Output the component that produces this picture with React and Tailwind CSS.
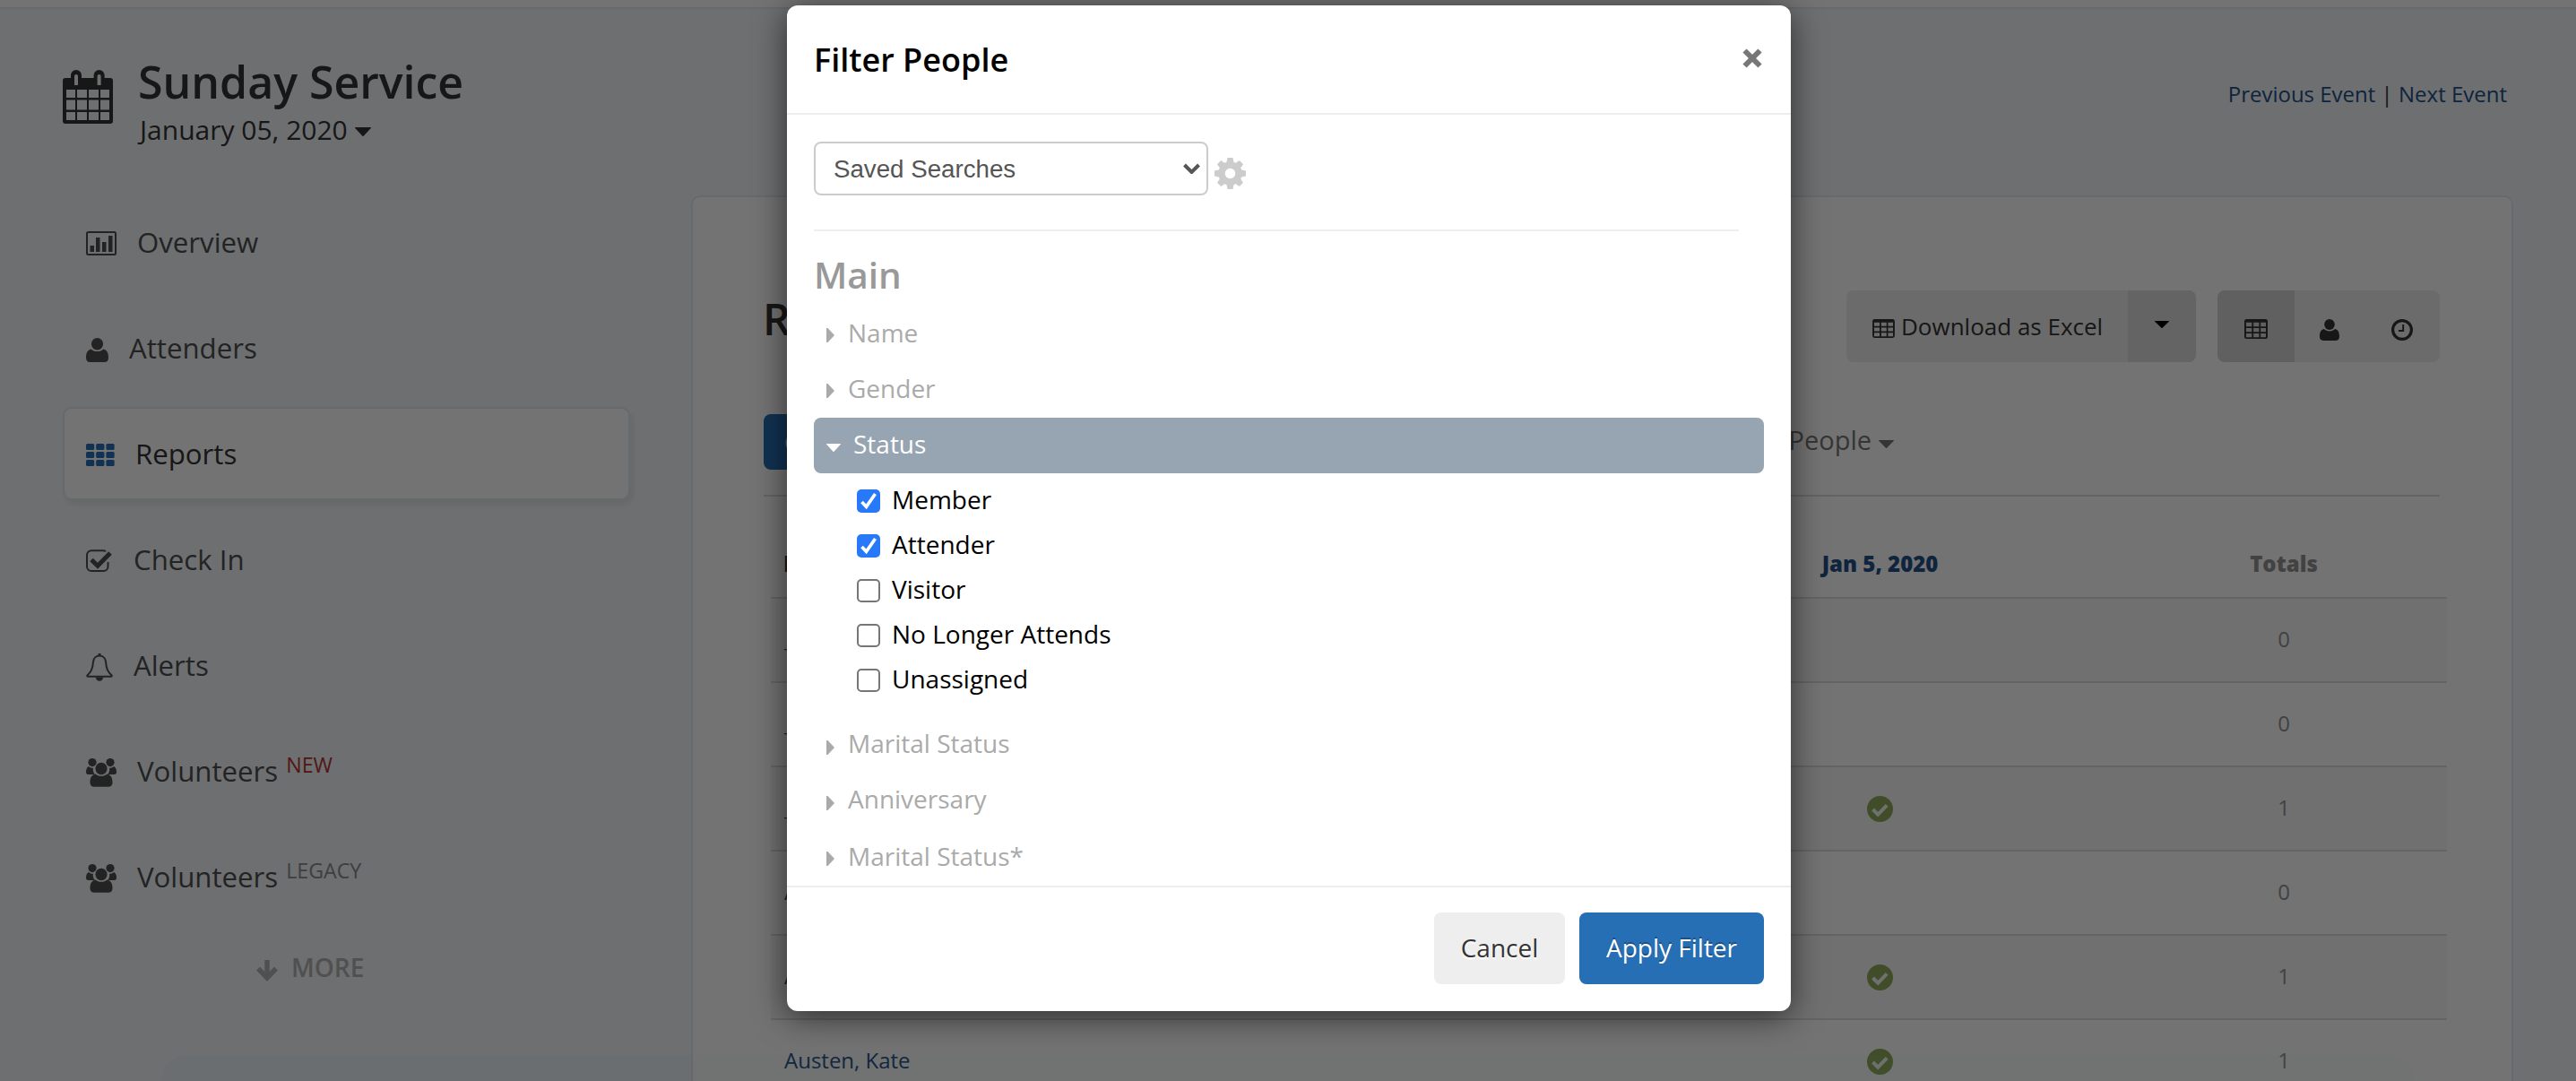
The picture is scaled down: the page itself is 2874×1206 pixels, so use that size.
import React from "react";

/* ---------- icons ---------- */

const CalendarIcon = () => (
  <svg className="block h-[61px] w-14" viewBox="0 0 56 61" fill="#333">
    <path
      fillRule="evenodd"
      d="M3 9H9V6a6 6 0 0 1 12 0v3H34.600V6a6 6 0 0 1 12 0v3H53a3 3 0 0 1 3 3V57a3 3 0 0 1-3 3H3a3 3 0 0 1-3-3V12a3 3 0 0 1 3-3zM13 7V17h4V7a2 2 0 0 0-4 0zM38.600 7V17h4V7a2 2 0 0 0-4 0zM4 22V31H14V22zM16 22V31H27V22zM29 22V31H40V22zM42 22V31H52V22zM4 33.500V44.500H14V33.500zM16 33.500V44.500H27V33.500zM29 33.500V44.500H40V33.500zM42 33.500V44.500H52V33.500zM4 47V56H14V47zM16 47V56H27V47zM29 47V56H40V47zM42 47V56H52V47z"
    />
  </svg>
);

const ChartIcon = () => (
  <svg className="block h-7 w-[34px]" viewBox="0 0 34 28" fill="#4f4f4f">
    <rect x="1" y="1" width="32" height="25" rx="1.500" fill="none" stroke="#4f4f4f" strokeWidth="2" />
    <rect x="4.500" y="16" width="4.500" height="7" />
    <rect x="11" y="7" width="4.500" height="16" />
    <rect x="18" y="12" width="4.500" height="11" />
    <rect x="25" y="5" width="4.500" height="18" />
  </svg>
);

const UserIcon = ({ className, fill }) => (
  <svg className={className} viewBox="0 0 25 27" fill={fill}>
    <ellipse cx="12.500" cy="6.800" rx="6.600" ry="6.800" />
    <path d="M5.500 12.500C1.500 13.500 0 17 0 22c0 3 1.500 5 4.500 5h16c3 0 4.500-2 4.500-5 0-5-1.500-8.500-5.500-9.500-1.800 1.700-4 2.600-7 2.600s-5.200-.9-7-2.600z" />
  </svg>
);

const GridDotsIcon = () => (
  <svg className="block h-[26px] w-8" viewBox="0 0 32 26" fill="#276fb5">
    {[0, 9, 18].map((y) =>
      [0, 11.2, 22.4].map((x) => <rect key={x + "-" + y} x={x} y={y} width="9.200" height="7" rx="1.500" />)
    )}
  </svg>
);

const CheckSquareIcon = () => (
  <svg className="block h-[26px] w-[30px]" viewBox="0 0 30 26" fill="none" stroke="#4f4f4f">
    <path d="M22 2.200C21 1.300 20 1.200 19 1.200H6a5 5 0 0 0-5 5V19a5 5 0 0 0 5 5H19.500a5 5 0 0 0 5-5V14" strokeWidth="2" />
    <path d="M6 11.500l7 6.800L27 4" strokeWidth="5" />
  </svg>
);

const BellIcon = () => (
  <svg className="block h-[31px] w-[30px]" viewBox="0 0 30 31" fill="none" stroke="#4f4f4f" strokeWidth="2">
    <path d="M15 2.500c-4.500 0-7 3.500-7.200 8-.3 7-2 10-6 13.500-1 1-.6 1.800.4 1.800h25.600c1 0 1.400-.8.4-1.800-4-3.500-5.700-6.500-6-13.500-.2-4.500-2.700-8-7.200-8z" />
    <path d="M15 0v3" strokeWidth="3" />
    <path d="M10.800 26.500a4.200 4.200 0 0 0 8.400 0z" fill="#4f4f4f" stroke="none" />
  </svg>
);

const GroupIcon = () => (
  <svg className="block h-8 w-[34px]" viewBox="0 0 34 32" fill="#4f4f4f">
    <circle cx="7" cy="4.600" r="4.600" />
    <circle cx="27" cy="4.600" r="4.600" />
    <path d="M3 9C.8 10 0 12.500 0 15.500 0 17 .8 18 2.500 18h7.200c-1.500-2-2.200-4.500-1.800-7.200-2 .2-3.600-.5-4.900-1.800z" />
    <path d="M31 9c2.200 1 3 3.500 3 6.500 0 1.500-.8 2.500-2.500 2.500h-7.200c1.500-2 2.200-4.500 1.800-7.200 2 .2 3.600-.5 4.900-1.800z" />
    <ellipse cx="17" cy="11.500" rx="6.600" ry="6.800" />
    <path d="M10.500 17.500C6 18.500 4.500 22 4.500 27c0 3 1.500 4.700 4.500 4.700h16c3 0 4.500-1.700 4.500-4.700 0-5-1.500-8.500-6-9.500-1.700 1.500-3.700 2.300-6.500 2.300s-4.800-.8-6.500-2.300z" />
  </svg>
);

const ArrowDownIcon = () => (
  <svg className="block h-6 w-6" viewBox="0 0 24 24" fill="none" stroke="#b2b2b2" strokeWidth="5.500">
    <path d="M12 0v17" />
    <path d="M2 9.500l10 10.500 10-10.500" />
  </svg>
);

const TableIcon = ({ className }) => (
  <svg className={className} viewBox="0 0 26 22" fill="#333">
    <path
      fillRule="evenodd"
      d="M2.500 0h21A2.500 2.500 0 0 1 26 2.500v17a2.500 2.500 0 0 1-2.500 2.500h-21A2.500 2.500 0 0 1 0 19.500v-17A2.500 2.500 0 0 1 2.500 0zM2 3.800V8.200H8.300V3.800zM10.200 3.800V8.200H16.400V3.800zM18.200 3.800V8.200H24V3.800zM2 10V14.200H8.300V10zM10.200 10V14.200H16.400V10zM18.200 10V14.200H24V10zM2 16V20.200H8.300V16zM10.200 16V20.200H16.400V16zM18.200 16V20.200H24V16z"
    />
  </svg>
);

const ClockIcon = () => (
  <svg className="block size-6" viewBox="0 0 24 24" fill="none" stroke="#333">
    <circle cx="12" cy="12" r="10.400" strokeWidth="3.200" />
    <path d="M13.200 6v7H8" strokeWidth="2" />
  </svg>
);

const CheckCircleIcon = () => (
  <svg className="block size-[29px]" viewBox="0 0 29 29">
    <circle cx="14.500" cy="14.500" r="14.500" fill="#8eac5a" />
    <path d="M6.500 15l5.700 5.600L22.200 10.400" fill="none" stroke="#f8f8f8" strokeWidth="4" />
  </svg>
);

const GearIcon = () => (
  <svg className="block size-[35px]" viewBox="-17.500 -17.500 35 35">
    {[0, 45, 90, 135].map((a) => (
      <path key={a} transform={`rotate(${a})`} d="M-3-17.500h6l1.200 6v23l-1.200 6h-6l-1.200-6v-23z" fill="#ccc" />
    ))}
    <circle r="13.200" fill="#ccc" />
    <circle r="5.800" fill="#fff" />
  </svg>
);

const Caret = ({ className }) => (
  <svg className={className} viewBox="0 0 18 10" preserveAspectRatio="none" fill="currentColor">
    <path d="M.6 0h16.800c.6 0 .8.5.4.9L9.600 9.700c-.4.4-.8.4-1.200 0L.2.900C-.2.500 0 0 .6 0z" />
  </svg>
);

const CaretRight = () => (
  <svg className="block h-4 w-[9px]" viewBox="0 0 9 16" fill="#aaa">
    <path d="M0 0h1.500L9 8l-7.500 8H0z" />
  </svg>
);

/* ---------- background page ---------- */

const navItems = [
  { label: "Overview", icon: <ChartIcon />, gap: "gap-[23px]" },
  { label: "Attenders", icon: <UserIcon className="block h-[27px] w-[25px]" fill="#4f4f4f" />, gap: "gap-[23px]" },
  { label: "Reports", icon: <GridDotsIcon />, gap: "gap-[23px]", active: true },
  { label: "Check In", icon: <CheckSquareIcon />, gap: "gap-[23px]" },
  { label: "Alerts", icon: <BellIcon />, gap: "gap-[23px]" },
  { label: "Volunteers", icon: <GroupIcon />, gap: "gap-[23px]", tag: "NEW", tagClass: "text-[#b5342e]" },
  { label: "Volunteers", icon: <GroupIcon />, gap: "gap-[23px]", tag: "LEGACY", tagClass: "text-[#8c8c8c]" },
];

const Sidebar = () => (
  <aside className="w-[633px] shrink-0">
    <nav className="flex flex-col gap-3.5">
      {navItems.map((item, i) => (
        <a
          key={i}
          className={
            item.active
              ? "flex h-[104px] items-center rounded-[10px] border-2 border-[#e0ebf4] bg-white pl-6 text-[#333] shadow-[3px_5px_6px_rgba(120,120,60,0.12)]"
              : "flex h-[104px] items-center border-2 border-transparent pl-6 text-[#4f4f4f]"
          }
        >
          <span className={`flex items-center ${item.gap}`}>
            <span className="pt-1">{item.icon}</span>
            <span className="text-[31.2px] leading-[48px]">{item.label}</span>
          </span>
          {item.tag && <sup className={`top-0 ml-[9px] pb-3.5 text-[23.2px] leading-8 ${item.tagClass}`}>{item.tag}</sup>}
        </a>
      ))}
    </nav>
    <div className="mt-[19px] flex h-[60px] items-center gap-[15px] pl-[216px] text-[28px] font-semibold text-[#b2b2b2]">
      <span className="pt-2">
        <ArrowDownIcon />
      </span>
      <span>MORE</span>
    </div>
  </aside>
);

const rows = [
  { name: "_Lee", check: false, total: 0 },
  { name: "_May", check: false, total: 0 },
  { name: "_Roy", check: true, total: 1 },
  { name: "Abel", check: false, total: 0 },
  { name: "Alma", check: true, total: 1 },
  { name: "Austen, Kate", check: true, total: 1 },
];

const ReportTable = () => (
  <div className="ml-2 w-[1870px] text-[24px]">
    <div className="grid h-[114px] grid-cols-[1000px_475px_1fr] items-end border-b-2 border-[#ddd] pb-[19px] font-extrabold leading-9">
      <span className="pl-3.5 text-[#333]">Name</span>
      <span className="text-center text-[#245088]">Jan 5, 2020</span>
      <span className="pl-[31px] text-center text-[#929292]">Totals</span>
    </div>
    {rows.map((r, i) => (
      <div
        key={r.name}
        className={`grid h-[94px] grid-cols-[1000px_475px_1fr] items-center border-b-2 border-[#ddd] ${i % 2 === 0 ? "bg-[#f8f8f8]" : "bg-white"}`}
      >
        <span className="pb-0.5 pl-[15px] text-[#245088]">{r.name}</span>
        <span className="flex justify-center">{r.check && <CheckCircleIcon />}</span>
        <span className="pb-0.5 pl-[31px] text-center text-[#929292]">{r.total}</span>
      </div>
    ))}
  </div>
);

const ReportCard = () => (
  <section className="h-[1100px] w-[2033px] rounded-[10px] border-2 border-[#e0ebf4] bg-white pl-[79px] pt-[104px]">
    <div className="flex w-[1870px] items-start justify-between">
      <h2 className="text-[48px] font-semibold leading-[63px] text-[#333]">
        <span className="-ml-px">R</span>
      </h2>
      <div className="flex gap-6 text-[#333]">
        <div className="flex h-20 overflow-hidden rounded-lg bg-[#eee]">
          <button className="flex w-[314px] items-center gap-[7px] pl-[29px] text-[26px]">
            <TableIcon className="block h-[21px] w-[25px] translate-y-0.5" />
            Download as Excel
          </button>
          <button className="flex w-19 items-center justify-center bg-[#ddd] pb-1 text-black">
            <Caret className="block h-2 w-4" />
          </button>
        </div>
        <div className="flex h-20 overflow-hidden rounded-lg bg-[#eee]">
          <button className="flex w-[86px] items-center justify-center bg-[#d5d5d5] pt-1.5">
            <TableIcon className="block h-[22px] w-[26px]" />
          </button>
          <button className="flex w-[78px] items-center justify-center pt-2">
            <UserIcon className="block h-6 w-[22px]" fill="#333" />
          </button>
          <button className="flex w-[84px] items-center justify-center pt-2">
            <ClockIcon />
          </button>
        </div>
      </div>
    </div>
    <div className="mt-[58px] flex w-[1870px] items-start border-b-2 border-[#ddd] pb-7">
      <button className="h-[62px] w-[200px] rounded-lg bg-[#276fb5] pl-[23px] text-left text-[28px] text-white">Check</button>
      <div className="ml-auto mr-[609px] flex items-center gap-2 pt-1.5 text-[29px] leading-[46px] text-[#777]">
        <span>People</span>
        <Caret className="block h-[9px] w-[17px] translate-y-1" />
      </div>
    </div>
    <ReportTable />
  </section>
);

const BackgroundPage = () => (
  <div className="h-[1206px] overflow-hidden bg-[#f2f6fb]">
    <div className="h-2.5 border-b-2 border-[#e0ebf4] bg-white" />
    <header className="flex h-[208px] items-start pl-[70px] pr-[77px]">
      <div className="pt-[68px]">
        <CalendarIcon />
      </div>
      <div className="pl-7 pt-[46px] text-[#333]">
        <h1 className="text-[50px] font-semibold leading-[70px]">Sunday Service</h1>
        <div className="flex items-center gap-2 pl-0.5 text-[30px] leading-[38px]">
          January 05, 2020
          <Caret className="mt-1 block h-2.5 w-[18px]" />
        </div>
      </div>
      <div className="ml-auto pt-[77px] text-[24px] leading-9 text-[#245088]">
        Previous Event <span className="text-[#333]">|</span> Next Event
      </div>
    </header>
    <div className="flex items-start gap-[68px] pl-[70px]">
      <Sidebar />
      <ReportCard />
    </div>
  </div>
);

/* ---------- modal ---------- */

const FilterRow = ({ label, offset = "pt-[9px]" }) => (
  <div className="flex h-[62px] items-start pl-3.5 text-[28px] text-[#aaa]">
    <span className="pt-6">
      <CaretRight />
    </span>
    <span className={`pl-[15px] leading-[40px] ${offset}`}>{label}</span>
  </div>
);

const statuses = [
  ["Member", true],
  ["Attender", true],
  ["Visitor", false],
  ["No Longer Attends", false],
  ["Unassigned", false],
];

const CheckBox = ({ checked }) =>
  checked ? (
    <span className="flex size-[26px] items-center justify-center rounded-[5px] bg-[#2878fa]">
      <svg className="block size-[26px]" viewBox="0 0 26 26" fill="none" stroke="#fff" strokeWidth="3.600">
        <path d="M5.500 14l5 5.300L20.500 5" />
      </svg>
    </span>
  ) : (
    <span className="size-[26px] rounded-[5px] border-2 border-[#767676] bg-white" />
  );

const FilterModal = () => (
  <div className="flex h-[1122px] w-[1120px] flex-col overflow-hidden rounded-[12px] bg-white shadow-[0_6px_36px_rgba(0,0,0,0.6)]">
    <div className="flex h-[122px] items-start justify-between border-b-2 border-[#eee] pl-[30px] pr-8">
      <h3 className="pt-9 text-[36px] font-semibold leading-[50px] text-black">Filter People</h3>
      <svg className="mt-12 block size-[22px]" viewBox="0 0 22 22" stroke="#777" strokeWidth="6">
        <path d="M2.500 2.500l17 17M19.500 2.500l-17 17" />
      </svg>
    </div>

    <div className="h-[860px] overflow-hidden pl-[30px] pr-[30px]">
      <div className="flex pt-[30px]">
        <div className="flex h-[60px] w-[440px] items-center justify-between rounded-lg border-2 border-[#ccc] pl-5 pr-[7px] font-['Liberation_Sans',sans-serif] text-[27.700px] text-[#555]">
          <span className="pt-0.5">Saved Searches</span>
          <svg className="block h-3 w-[19px]" viewBox="0 0 19 12" fill="none" stroke="#555" strokeWidth="4">
            <path d="M1.500 2l8 8 8-8" />
          </svg>
        </div>
        <div className="ml-[7px] pt-[18px]">
          <GearIcon />
        </div>
      </div>
      <div className="mr-7 mt-[38px] h-0.5 bg-[#eee]" />
      <h4 className="mt-[21px] h-[63px] text-[40.500px] font-semibold leading-[56px] text-[#999]">Main</h4>

      <FilterRow label="Name" />
      <FilterRow label="Gender" />
      <div className="flex h-[62px] items-center gap-3.5 rounded-lg bg-[#97a4b1] pl-3.5 text-[28px] text-white">
        <Caret className="mt-1 block h-[9px] w-4" />
        <span className="pb-1">Status</span>
      </div>
      <div className="pb-[18px] pl-12 pt-1.5">
        {statuses.map(([label, checked]) => (
          <label key={label} className="flex h-[50px] items-center gap-[13px] text-[28px] text-black">
            <CheckBox checked={checked} />
            <span className="-translate-y-0.5">{label}</span>
          </label>
        ))}
      </div>
      <FilterRow label="Marital Status" offset="pt-[7px]" />
      <FilterRow label="Anniversary" offset="pt-[7px]" />
      <FilterRow label="Marital Status*" />
    </div>

    <div className="flex flex-1 items-start justify-end gap-4 border-t-2 border-[#eee] pr-[30px] pt-7 text-[28px]">
      <button className="h-20 w-[146px] rounded-lg bg-[#eee] pb-0.5 text-[#333] [text-shadow:0_2px_2px_#fff]">Cancel</button>
      <button className="h-20 w-[206px] rounded-lg bg-[#276fb5] pb-0.5 text-white [text-shadow:0_-2px_0_rgba(0,0,0,0.3)]">Apply Filter</button>
    </div>
  </div>
);

export default function App() {
  return (
    <div className="relative h-[1206px] w-[2874px] overflow-hidden font-['Open_Sans','Noto_Sans',sans-serif]">
      <BackgroundPage />
      <div className="absolute inset-0 bg-black/55" />
      <div className="absolute inset-x-[180px] bottom-0 h-[29px] rounded-t-[60px] bg-[#5a6b60]/6" />
      <div className="absolute inset-0 flex justify-center pt-1.5 pl-0.5">
        <FilterModal />
      </div>
    </div>
  );
}
